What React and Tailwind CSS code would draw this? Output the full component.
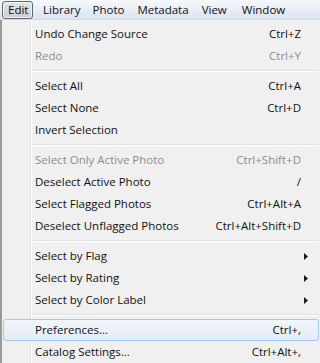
import React from 'react';

const items = [
  { label: "Undo Change Source", key: "Ctrl+Z" },
  { label: "Redo", key: "Ctrl+Y", disabled: true },
  { sep: true },
  { label: "Select All", key: "Ctrl+A" },
  { label: "Select None", key: "Ctrl+D" },
  { label: "Invert Selection" },
  { sep: true },
  { label: "Select Only Active Photo", key: "Ctrl+Shift+D", disabled: true },
  { label: "Deselect Active Photo", key: "/" },
  { label: "Select Flagged Photos", key: "Ctrl+Alt+A" },
  { label: "Deselect Unflagged Photos", key: "Ctrl+Alt+Shift+D" },
  { sep: true },
  { label: "Select by Flag", sub: true },
  { label: "Select by Rating", sub: true },
  { label: "Select by Color Label", sub: true },
  { sep: true },
  { label: "Preferences...", key: "Ctrl+,", active: true },
  { label: "Catalog Settings...", key: "Ctrl+Alt+," },
];

const menus = [
  { label: "Library", cls: "ml-[10px]" },
  { label: "Photo", cls: "ml-[12px]" },
  { label: "Metadata", cls: "ml-[13px]" },
  { label: "View", cls: "ml-[13px]" },
  { label: "Window", cls: "ml-[15px]" },
];

const Arrow = () => (
  <svg width="4" height="7" viewBox="0 0 4 7" className="block">
    <path d="M0 0 L4 3.5 L0 7 Z" fill="#1a1a1a" />
  </svg>
);

const App = () => {
  return (
    <div className="w-[320px] h-[363px] overflow-hidden bg-[#f0f0f0] text-[11.5px] text-[#111]" style={{ fontFamily: '"Open Sans", "Noto Sans", sans-serif' }}>

      {/* Menu bar */}
      <div className="h-[20px] flex items-center bg-gradient-to-b from-[#f6f9fd] via-[#e9eef7] to-[#dae3f0] border-b border-[#d3dce8]">
        <div className="ml-[2px] h-[18px] w-[31px] flex items-center pl-[5px] rounded-[3px] border border-[#5f6670] bg-gradient-to-b from-[#e4e6e9] to-[#c9ccd1] shadow-[inset_0_0_0_1px_#f4f5f6]">
          Edit
        </div>
        {menus.map((m) => (
          <div key={m.label} className={m.cls}>{m.label}</div>
        ))}
      </div>

      {/* Dropdown */}
      <div className="relative h-[343px] border-l-2 border-[#9a9a9a] pt-[3px]">
        {/* gutter line */}
        <div className="absolute top-0 bottom-0 left-[28px] w-[2px] border-l border-[#e2e3e3] bg-[#fff]" />

        {items.map((it, i) => {
          if (it.sep) {
            return (
              <div key={i} className="h-[8px] flex flex-col justify-center pl-[30px] pr-[2px]">
                <div className="h-[1px] bg-[#e0e0e0]" />
                <div className="h-[1px] bg-white" />
              </div>
            );
          }
          return (
            <div
              key={i}
              className={`relative h-[22px] flex items-center pl-[31px] pr-[17px] mx-[1px] ${it.active ? "rounded-[3px] border border-[#a8c9ef] bg-gradient-to-b from-[#f2f6fc] to-[#e3ecf8]" : "border border-transparent"} ${it.disabled ? "text-[#8d8d8d]" : ""}`}
            >
              <span className="flex-1">{it.label}</span>
              {it.key && <span>{it.key}</span>}
              {it.sub && <span className="mr-[-7px]"><Arrow /></span>}
            </div>
          );
        })}
      </div>
    </div>
  );
};

export default App;
